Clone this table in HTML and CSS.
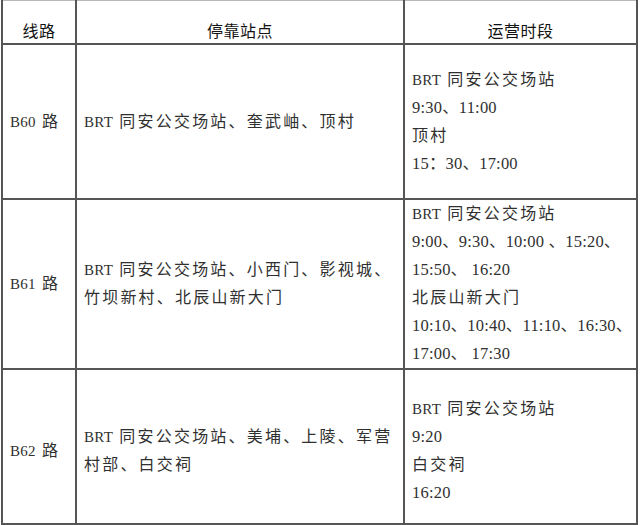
FILE: index.html
```html
<!DOCTYPE html>
<html lang="zh-CN">
<head>
<meta charset="utf-8">
<title>公交线路</title>
<link rel="stylesheet" href="styles.css">
</head>
<body>
<table class="sched">
  <colgroup><col class="c-line"><col class="c-stops"><col class="c-time"></colgroup>
  <thead>
    <tr class="head"><th>线路</th><th>停靠站点</th><th>运营时段</th></tr>
  </thead>
  <tbody>
    <tr class="r1">
      <td class="line"><span class="en">B60</span> 路</td>
      <td class="stops"><span class="en">BRT</span> 同安公交场站、奎武岫、顶村</td>
      <td class="times">
        <div class="stn"><span class="en">BRT</span> 同安公交场站</div>
        <div class="tm">9:30、11:00</div>
        <div class="stn">顶村</div>
        <div class="tm">15：30、17:00</div>
      </td>
    </tr>
    <tr class="r2">
      <td class="line"><span class="en">B61</span> 路</td>
      <td class="stops"><span class="en">BRT</span> 同安公交场站、小西门、影视城、<br>竹坝新村、北辰山新大门</td>
      <td class="times">
        <div class="stn"><span class="en">BRT</span> 同安公交场站</div>
        <div class="tm">9:00、9:30、10:00 、15:20、</div>
        <div class="tm">15:50、 16:20</div>
        <div class="stn">北辰山新大门</div>
        <div class="tm">10:10、10:40、11:10、16:30、</div>
        <div class="tm">17:00、 17:30</div>
      </td>
    </tr>
    <tr class="r3">
      <td class="line"><span class="en">B62</span> 路</td>
      <td class="stops"><span class="en">BRT</span> 同安公交场站、美埔、上陵、军营<br>村部、白交祠</td>
      <td class="times">
        <div class="stn"><span class="en">BRT</span> 同安公交场站</div>
        <div class="tm">9:20</div>
        <div class="stn">白交祠</div>
        <div class="tm">16:20</div>
      </td>
    </tr>
  </tbody>
</table>
</body>
</html>
```
FILE: styles.css
```css
html, body {
  margin: 0;
  padding: 0;
  background: #fff;
}

body {
  font-family: "Liberation Serif", "Noto Sans CJK SC", serif;
  font-size: 16px;
  color: #303030;
}

.sched {
  border-collapse: collapse;
  table-layout: fixed;
  width: 635px;
  margin: 0 0 0 1px;
}

.c-line { width: 74px; }
.c-stops { width: 328px; }
.c-time { width: 233px; }

.sched th,
.sched td {
  border: 2px solid #555;
  padding: 0;
}

.sched th {
  border-top: 1px solid #b8b8b8;
  height: 27px;
  padding-top: 15px;
  font-family: "Noto Sans CJK SC", sans-serif;
  font-weight: normal;
  font-size: 16px;
  letter-spacing: 0.5px;
  color: #111;
  text-align: center;
  vertical-align: middle;
  line-height: 20px;
}

.sched td {
  vertical-align: middle;
  line-height: 28px;
  white-space: nowrap;
}

.sched .r1 td { height: 153px; }
.sched .r2 td { height: 168px; }
.sched .r3 td { height: 145px; padding-top: 8px; }

.sched .line {
  padding-left: 7px;
  letter-spacing: 2px;
}

.sched .stops {
  padding-left: 7px;
  letter-spacing: 2.2px;
}

.sched .times {
  padding-left: 7px;
}

.stn {
  letter-spacing: 2.2px;
}

.tm {
  font-size: 16.5px;
  letter-spacing: 0.2px;
}

.en {
  font-size: 15px;
  letter-spacing: 0.3px;
}
```
